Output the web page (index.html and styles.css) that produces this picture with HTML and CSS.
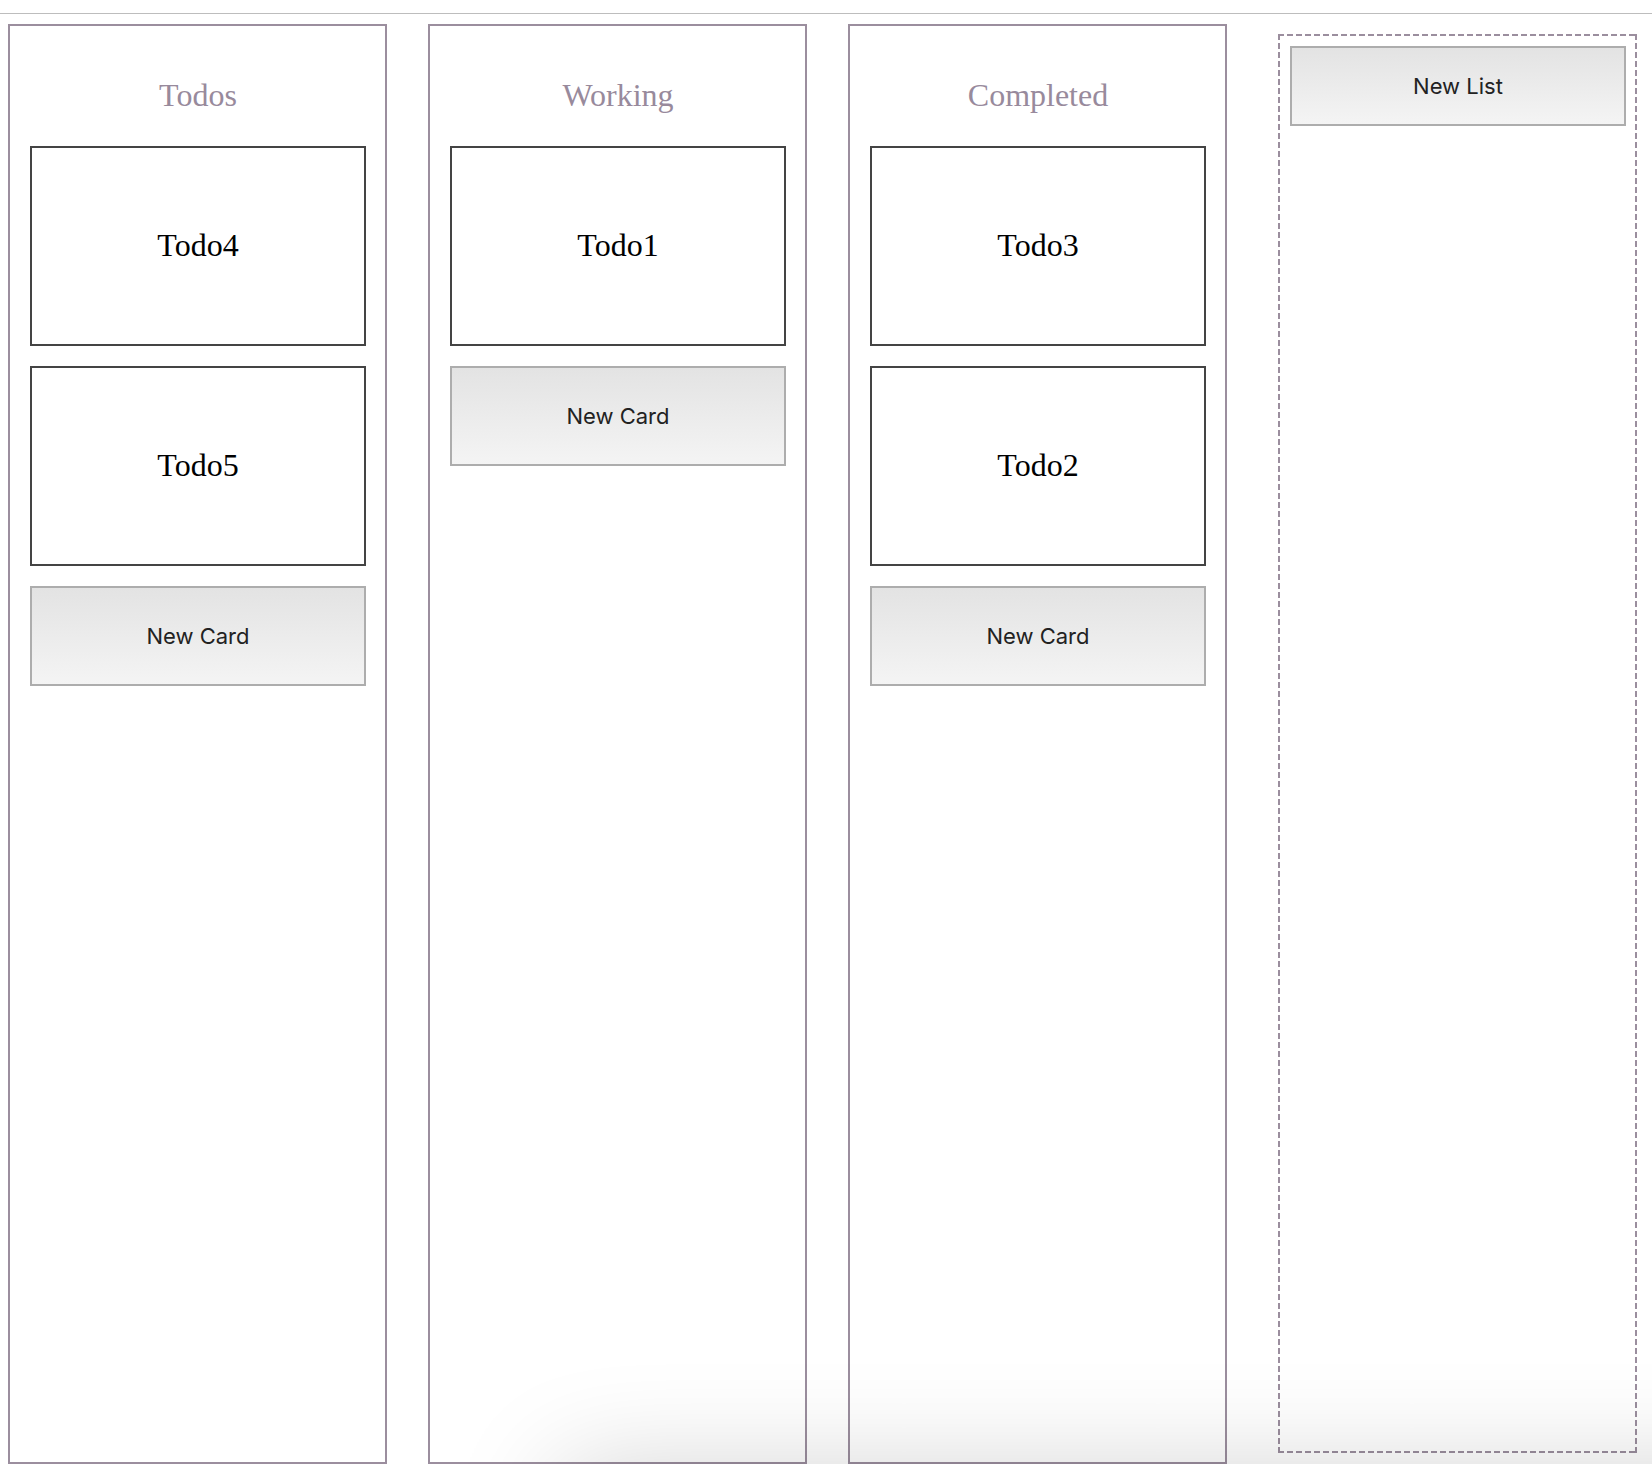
FILE: index.html
```html
<!DOCTYPE html>
<html>
<head>
<meta charset="utf-8">
<title>Board</title>
<link rel="stylesheet" href="styles.css">
</head>
<body>
<div class="topbar"></div>
<main class="board">
  <section class="list">
    <h1 class="list-title">Todos</h1>
    <div class="card">Todo4</div>
    <div class="card">Todo5</div>
    <button class="btn btn-card">New Card</button>
  </section>
  <section class="list">
    <h1 class="list-title">Working</h1>
    <div class="card">Todo1</div>
    <button class="btn btn-card">New Card</button>
  </section>
  <section class="list">
    <h1 class="list-title">Completed</h1>
    <div class="card">Todo3</div>
    <div class="card">Todo2</div>
    <button class="btn btn-card">New Card</button>
  </section>
  <section class="new-list">
    <button class="btn btn-list">New List</button>
  </section>
</main>
<div class="bottom-shade"></div>
</body>
</html>
```

FILE: styles.css
```css
html, body {
  margin: 0;
  padding: 0;
  background: #ffffff;
  overflow: hidden;
}

body {
  font-family: "Liberation Serif", "Times New Roman", serif;
  height: 1464px;
}

.topbar {
  height: 13px;
  border-bottom: 1px solid #bdbdbd;
}

.board {
  display: flex;
  align-items: flex-start;
  gap: 41px;
  padding: 10px 0 0 8px;
}

.list {
  box-sizing: border-box;
  width: 379px;
  height: 1440px;
  flex: none;
  border: 2px solid #9b8e9e;
  display: flex;
  flex-direction: column;
  align-items: flex-start;
  gap: 20px;
  padding: 0 19px 0 20px;
}

.list-title {
  align-self: stretch;
  margin: 52px 0 13px;
  font-size: 32px;
  font-weight: normal;
  text-align: center;
  color: #988a9c;
  line-height: 35px;
}

.card {
  box-sizing: border-box;
  width: 336px;
  height: 200px;
  border: 2px solid #444444;
  display: flex;
  align-items: center;
  justify-content: center;
  padding-bottom: 2px;
  font-size: 32px;
  color: #000;
}

.btn {
  box-sizing: border-box;
  width: 336px;
  border: 2px solid #adadad;
  background: linear-gradient(#e3e3e3, #f4f4f4);
  font-family: Inter, "Liberation Sans", Arial, sans-serif;
  font-size: 22px;
  color: #222;
  padding: 0;
  margin: 0;
  display: flex;
  align-items: center;
  justify-content: center;
}

.btn-card {
  height: 100px;
}

.btn-list {
  height: 80px;
}

.new-list {
  box-sizing: border-box;
  flex: none;
  width: 359px;
  height: 1419px;
  margin: 10px 0 0 10px;
  padding: 12px 11px 12px 12px;
  background:
    repeating-linear-gradient(90deg, #9b8e9e 0 6px, transparent 6px 9px) top left / 100% 2px no-repeat,
    repeating-linear-gradient(90deg, #9b8e9e 0 6px, transparent 6px 9px) bottom left / 100% 2px no-repeat,
    repeating-linear-gradient(180deg, #9b8e9e 0 6px, transparent 6px 9px) top left / 2px 100% no-repeat,
    repeating-linear-gradient(180deg, #9b8e9e 0 6px, transparent 6px 9px) top right / 2px 100% no-repeat;
}

.bottom-shade {
  position: fixed;
  left: 560px;
  right: -200px;
  top: 1470px;
  height: 200px;
  box-shadow: 0 0 110px 0 rgba(0, 0, 0, 0.18);
  pointer-events: none;
}
```
